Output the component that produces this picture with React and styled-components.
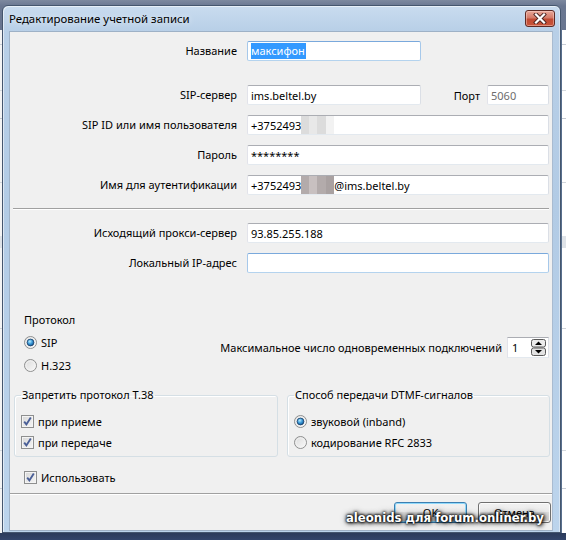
import React from 'react';
import styled, { createGlobalStyle } from 'styled-components';

const GlobalStyle = createGlobalStyle`
  html, body {
    margin: 0;
    padding: 0;
  }
  body {
    background: #2f3f5e;
    font-family: "Noto Sans", "Open Sans", sans-serif;
  }
`;

const Screen = styled.div`
  position: relative;
  width: 566px;
  height: 540px;
  overflow: hidden;
  display: flex;
  align-items: flex-start;
  background: linear-gradient(to bottom, #7d899f 0px, #6a7791 6px, #56647f 300px, #2c3c5c 534px, #33456a 540px);
`;

const Peek = styled.div`
  flex: none;
  width: ${p => p.$w}px;
  margin-top: 30px;
  height: 503px;
  background:
    linear-gradient(to bottom,
      transparent 14px, #c9ced6 14px, #c9ced6 15px, transparent 15px,
      transparent 60px, #d5d9de 60px, #d5d9de 61px, transparent 61px,
      transparent 88px, #c4c9d0 88px, #c4c9d0 89px, transparent 89px,
      transparent 152px, #d2d6db 152px, #d2d6db 153px, transparent 153px,
      transparent 206px, #dfe3e8 206px, #dfe3e8 218px, transparent 218px,
      transparent 298px, #cfd3d8 298px, #cfd3d8 299px, transparent 299px,
      transparent 420px, #d5d9de 420px, #d5d9de 421px, transparent 421px,
      transparent 458px, #c9ced6 458px, #c9ced6 459px, transparent 459px),
    ${p => p.$bg};
  border-left: ${p => (p.$edge ? '1px solid #59708e' : 'none')};
`;

const Window = styled.div`
  flex: none;
  width: 559px;
  height: 528px;
  margin-top: 5px;
  box-sizing: border-box;
  border: 1px solid #45566e;
  border-radius: 6px 6px 0 0;
  padding: 0 7px 1px 6px;
  display: flex;
  flex-direction: column;
  background: linear-gradient(to bottom, #c9dcef 0px, #b8cfe7 25px, #b2cbe5 200px, #bcd4ec 527px);
  box-shadow: inset 1px 1px 0 rgba(255, 255, 255, 0.55), inset -1px 0 0 rgba(255, 255, 255, 0.4);
`;

const TitleBar = styled.div`
  height: 25px;
  flex: none;
  display: flex;
  align-items: center;
  justify-content: space-between;
`;

const Title = styled.span`
  font-size: 11.4px;
  color: #000;
  text-shadow: 0 0 6px rgba(255, 255, 255, 0.8);
`;

const CloseButton = styled.div`
  width: 30px;
  height: 17px;
  box-sizing: border-box;
  margin-right: -2px;
  border: 1px solid #5e2a24;
  border-radius: 3px;
  display: flex;
  align-items: center;
  justify-content: center;
  background: linear-gradient(to bottom, #e8a798 0%, #d47a68 45%, #c04a33 55%, #c9553a 100%);
  box-shadow: inset 0 0 0 1px rgba(255, 220, 210, 0.45);
`;

const Client = styled.div`
  flex: none;
  height: 500px;
  box-sizing: border-box;
  background: #f0f0f0;
  border: 1px solid #9eb1c6;
  border-right-color: #a9bbd0;
  display: flex;
  flex-direction: column;
  font-size: 11px;
  color: #000;
  position: relative;
`;

const Row = styled.div`
  display: grid;
  grid-template-columns: 227px 1fr;
  column-gap: 10px;
  align-items: center;
  margin-top: ${p => p.$mt}px;
  padding-right: 3px;
`;

const FieldLabel = styled.div`
  text-align: right;
  line-height: 20px;
  white-space: nowrap;
`;

const FieldLine = styled.div`
  display: flex;
  align-items: center;
`;

const TextBox = styled.div`
  box-sizing: border-box;
  height: 20px;
  width: ${p => (p.$w ? `${p.$w}px` : '100%')};
  flex: none;
  border: 1px solid;
  border-color: ${p => (p.$focus ? '#7aa9dc #a6c8ea #b4d3ee #a6c8ea' : '#abadb3 #dbdfe6 #e3e9ef #e2e3ea')};
  border-radius: 2px;
  background: #fff;
  padding: 0 3px;
  display: flex;
  align-items: center;
  white-space: nowrap;
  overflow: hidden;
  color: ${p => (p.$dim ? '#6d6d6d' : '#000')};
`;

const Selected = styled.span`
  background: #3399ff;
  color: #fff;
  line-height: 16px;
  padding: 0 1px 0 0;
`;

const Mosaic = styled.span`
  display: inline-block;
  width: 33px;
  height: 18px;
  flex: none;
  background:
    linear-gradient(to right, ${p => p.$a} 0 25%, ${p => p.$b} 25% 50%, ${p => p.$a} 50% 75%, ${p => p.$c} 75% 100%);
`;

const PortLabel = styled.span`
  margin-left: auto;
  margin-right: 7px;
`;

const Separator = styled.div`
  margin: ${p => p.$mt}px ${p => p.$side}px 0;
  border-top: 1px solid #a0a0a0;
  border-bottom: 1px solid #fff;
`;

const Middle = styled.div`
  display: flex;
  justify-content: space-between;
  align-items: flex-start;
  margin-top: 35px;
  padding: 0 3px 0 14px;
`;

const Column = styled.div`
  display: flex;
  flex-direction: column;
`;

const Line = styled.div`
  height: ${p => p.$h || 23}px;
  display: flex;
  align-items: center;
  gap: 4px;
  white-space: nowrap;
`;

const MaxWrap = styled.div`
  display: flex;
  align-items: center;
  gap: 5px;
  margin-top: 29px;
`;

const Spinner = styled.div`
  box-sizing: border-box;
  width: 42px;
  height: 21px;
  border: 1px solid;
  border-color: #abadb3 #dbdfe6 #e3e9ef #e2e3ea;
  background: #fff;
  display: flex;
  align-items: center;
  justify-content: space-between;
  padding: 0 2px 0 4px;
`;

const Groups = styled.div`
  display: grid;
  grid-template-columns: 264px 263px;
  column-gap: 9px;
  margin-top: 11px;
  padding-left: 4px;
`;

const GroupBox = styled.fieldset`
  margin: 0;
  min-width: 0;
  padding: 9px 6px 3px;
  border: 1px solid #d5dfe5;
  border-radius: 3px;
  box-shadow: inset 1px 1px 0 #fff;
`;

const Legend = styled.legend`
  padding: 0 1px;
  font-size: 11px;
  line-height: 14px;
`;

const UseRow = styled(Line)`
  margin-top: 10px;
  padding-left: 14px;
`;

const ButtonBar = styled.div`
  display: flex;
  justify-content: flex-end;
  gap: 11px;
  margin-top: 7px;
  padding-right: 1px;
`;

const Button = styled.div`
  box-sizing: border-box;
  width: 73px;
  height: 21px;
  border: 1px solid ${p => (p.$primary ? '#3c7fb1' : '#707070')};
  border-radius: 3px;
  display: flex;
  align-items: center;
  justify-content: center;
  background: linear-gradient(to bottom, #f2f2f2 0%, #ebebeb 49%, #dddddd 50%, #cfcfcf 100%);
  box-shadow: inset 0 0 0 1px ${p => (p.$primary ? '#8fd9fb' : '#fcfcfc')};
  color: #000;
`;

const Watermark = styled.div`
  position: absolute;
  right: 22px;
  bottom: 15px;
  font-family: "DejaVu Sans Condensed", "DejaVu Sans", sans-serif;
  font-stretch: condensed;
  font-weight: bold;
  font-size: 13px;
  color: #fff;
  white-space: nowrap;
  text-shadow: 0 0 2px #000, 0 0 3px #000, 1px 1px 4px #000, 0 0 6px rgba(0, 0, 0, 0.8);
`;

const CloseIcon = () => (
  <svg width="16" height="11" viewBox="0 0 16 11">
    <path d="M4 1.5 L12 9.5 M12 1.5 L4 9.5" stroke="#4a2320" strokeWidth="4" strokeLinecap="square" />
    <path d="M4 1.5 L12 9.5 M12 1.5 L4 9.5" stroke="#fff" strokeWidth="2.2" strokeLinecap="square" />
  </svg>
);

const Radio = ({ checked }) => (
  <svg width="13" height="13" viewBox="0 0 13 13">
    <defs>
      <linearGradient id="rb" x1="0" y1="0" x2="1" y2="1">
        <stop offset="0" stopColor="#d9d9d9" />
        <stop offset="1" stopColor="#fbfbfb" />
      </linearGradient>
      <radialGradient id="rd" cx="0.4" cy="0.35" r="0.7">
        <stop offset="0" stopColor="#b8ecff" />
        <stop offset="0.5" stopColor="#3c9ad8" />
        <stop offset="1" stopColor="#0d4f8c" />
      </radialGradient>
    </defs>
    <circle cx="6.5" cy="6.5" r="6" fill="url(#rb)" stroke="#8e8f8f" />
    <circle cx="6.5" cy="6.5" r="4.6" fill="none" stroke="#f4f4f4" strokeWidth="0.8" />
    {checked && <circle cx="6.5" cy="6.5" r="3.4" fill="url(#rd)" stroke="#1c3f68" strokeWidth="0.8" />}
  </svg>
);

const Check = () => (
  <svg width="13" height="13" viewBox="0 0 13 13">
    <defs>
      <linearGradient id="cb" x1="0" y1="0" x2="1" y2="1">
        <stop offset="0" stopColor="#d6d6d6" />
        <stop offset="1" stopColor="#f7f7f7" />
      </linearGradient>
    </defs>
    <rect x="0.5" y="0.5" width="12" height="12" fill="url(#cb)" stroke="#8e8f8f" />
    <rect x="1.5" y="1.5" width="10" height="10" fill="none" stroke="#f4f4f4" />
    <path d="M3.2 6.6 L5.4 9.4 L9.8 2.6" fill="none" stroke="#4a5f97" strokeWidth="1.9" />
  </svg>
);

const SpinArrows = () => (
  <svg width="15" height="17" viewBox="0 0 15 17">
    <rect x="0.5" y="0.5" width="14" height="7.5" rx="2" fill="#ececec" stroke="#5a5a5a" />
    <rect x="0.5" y="9" width="14" height="7.5" rx="2" fill="#e2e2e2" stroke="#5a5a5a" />
    <path d="M4 6 L7.5 2.5 L11 6 Z" fill="#000" />
    <path d="M4 11 L11 11 L7.5 14.5 Z" fill="#000" />
  </svg>
);

const fields = [
  { label: 'SIP ID или имя пользователя', value: <>+3752493<Mosaic $a="#dcdcdc" $b="#e8e8e8" $c="#f2f2f2" /></> },
  { label: 'Пароль', value: '********' },
  {
    label: 'Имя для аутентификации',
    value: <>+3752493<Mosaic $a="#b3abab" $b="#c8c0c0" $c="#a9a1a1" />@ims.beltel.by</>,
  },
];

export default function App() {
  return (
    <>
      <GlobalStyle />
      <Screen>
        <Peek $w={2} $bg="#f4f4f4" />
        <Window>
          <TitleBar>
            <Title>Редактирование учетной записи</Title>
            <CloseButton>
              <CloseIcon />
            </CloseButton>
          </TitleBar>
          <Client>
            <Row $mt={9}>
              <FieldLabel>Название</FieldLabel>
              <FieldLine>
                <TextBox $w={174} $focus>
                  <Selected>максифон</Selected>
                </TextBox>
              </FieldLine>
            </Row>
            <Row $mt={24}>
              <FieldLabel>SIP-сервер</FieldLabel>
              <FieldLine>
                <TextBox $w={174}>ims.beltel.by</TextBox>
                <PortLabel>Порт</PortLabel>
                <TextBox $w={62} $dim>5060</TextBox>
              </FieldLine>
            </Row>
            {fields.map(f => (
              <Row $mt={10} key={f.label}>
                <FieldLabel>{f.label}</FieldLabel>
                <TextBox>{f.value}</TextBox>
              </Row>
            ))}

            <Separator $mt={13} $side={3} />

            <Row $mt={13}>
              <FieldLabel>Исходящий прокси-сервер</FieldLabel>
              <TextBox>93.85.255.188</TextBox>
            </Row>
            <Row $mt={10}>
              <FieldLabel>Локальный IP-адрес</FieldLabel>
              <TextBox $focus />
            </Row>

            <Middle>
              <Column>
                <Line>Протокол</Line>
                <Line>
                  <Radio checked />
                  SIP
                </Line>
                <Line>
                  <Radio />
                  H.323
                </Line>
              </Column>
              <MaxWrap>
                <span>Максимальное число одновременных подключений</span>
                <Spinner>
                  <span>1</span>
                  <SpinArrows />
                </Spinner>
              </MaxWrap>
            </Middle>

            <Groups>
              <GroupBox>
                <Legend>Запретить протокол Т.38</Legend>
                <Line $h={21}>
                  <Check />
                  при приеме
                </Line>
                <Line $h={21}>
                  <Check />
                  при передаче
                </Line>
              </GroupBox>
              <GroupBox>
                <Legend>Способ передачи DTMF-сигналов</Legend>
                <Line $h={21}>
                  <Radio checked />
                  звуковой (inband)
                </Line>
                <Line $h={21}>
                  <Radio />
                  кодирование RFC 2833
                </Line>
              </GroupBox>
            </Groups>

            <UseRow $h={21}>
              <Check />
              Использовать
            </UseRow>

            <Separator $mt={5} $side={0} />

            <ButtonBar>
              <Button $primary>OK</Button>
              <Button>Отмена</Button>
            </ButtonBar>
          </Client>
        </Window>
        <Peek $w={5} $bg="#ffffff" $edge />
        <Watermark>aleonids для forum.onliner.by</Watermark>
      </Screen>
    </>
  );
}
